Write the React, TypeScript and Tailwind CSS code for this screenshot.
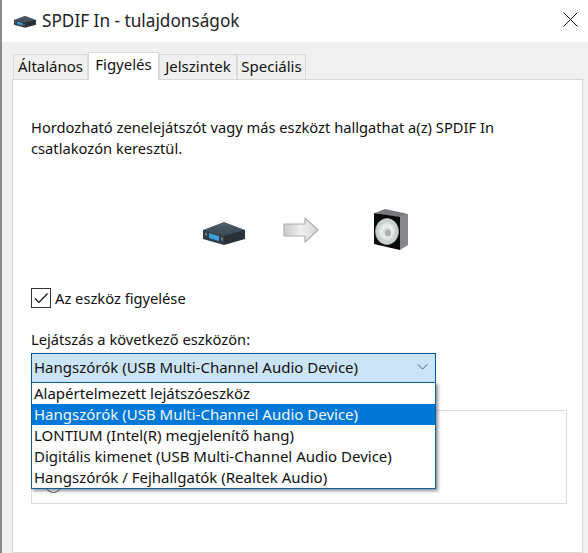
const font = "font-['Noto_Sans','Open_Sans',sans-serif]";

function DeviceIcon({ className }: { className?: string }) {
  return (
    <svg viewBox="0 0 42 24" className={className}>
      <defs>
        <linearGradient id="devTop" x1="0" y1="0" x2="0" y2="1">
          <stop offset="0" stopColor="#4f5f6a" />
          <stop offset="1" stopColor="#36444e" />
        </linearGradient>
      </defs>
      <path d="M0 9 L21 1 L42 9 L42 11 L21 17 L0 11 Z" fill="url(#devTop)" />
      <path d="M0 9 L0 18 L21 24 L21 15 Z" fill="#333c43" />
      <path d="M21 15 L42 9 L42 18 L21 24 Z" fill="#2a3137" />
      <path d="M6 12 L16 15 L16 20 L6 17 Z" fill="#3aa0dc" />
      <path d="M2 11 L4 12 L4 15 L2 14 Z" fill="#6d7a84" />
      <path d="M18 16 L20 17 L20 20 L18 19 Z" fill="#6d7a84" />
    </svg>
  );
}

function ArrowIcon({ className }: { className?: string }) {
  return (
    <svg viewBox="0 0 36 26" className={className}>
      <defs>
        <linearGradient id="arrowFill" x1="0" y1="0" x2="1" y2="0">
          <stop offset="0" stopColor="#c8cac8" />
          <stop offset="0.5" stopColor="#f0f0f0" />
          <stop offset="1" stopColor="#d2d4d2" />
        </linearGradient>
      </defs>
      <path
        d="M1 7 L22 7 L22 1 L35 13 L22 25 L22 19 L1 19 Z"
        fill="url(#arrowFill)"
        stroke="#adb1ad"
        strokeWidth="1.2"
        strokeLinejoin="round"
      />
    </svg>
  );
}

function SpeakerIcon({ className }: { className?: string }) {
  return (
    <svg viewBox="0 0 36 42" className={className}>
      <defs>
        <radialGradient id="cone" cx="0.5" cy="0.5" r="0.55">
          <stop offset="0" stopColor="#b9c2c0" />
          <stop offset="0.4" stopColor="#eef1f1" />
          <stop offset="0.75" stopColor="#c4cccc" />
          <stop offset="1" stopColor="#f2f4f4" />
        </radialGradient>
      </defs>
      <path d="M2 4 L12 0 L35 5 L28 9 Z" fill="#77777b" />
      <path d="M27 7 L35 5 L35 36 L27 41 Z" fill="#87878c" />
      <path d="M1 4 L27 8 L27 41 L1 35 Z" fill="#0a0a0a" />
      <ellipse cx="14" cy="22.5" rx="11.5" ry="13" fill="url(#cone)" stroke="#9ca4a4" strokeWidth="0.8" />
      <ellipse cx="15" cy="24" rx="3" ry="3.5" fill="#aab2b0" />
    </svg>
  );
}

const tabs = [
  { label: "Általános", width: "w-[75px]" },
  { label: "Figyelés", width: "w-[71px]" },
  { label: "Jelszintek", width: "w-[78px]" },
  { label: "Speciális", width: "w-[69px]" },
];
const devices = [
  "Alapértelmezett lejátszóeszköz",
  "Hangszórók (USB Multi-Channel Audio Device)",
  "LONTIUM (Intel(R) megjelenítő hang)",
  "Digitális kimenet (USB Multi-Channel Audio Device)",
  "Hangszórók / Fejhallgatók (Realtek Audio)",
];

export default function App() {
  return (
    <div className={`${font} w-[588px] h-[553px] overflow-hidden bg-white text-[14.7px] text-[#111] border-l-2 border-[#8a8a8a] flex flex-col`}>
      <div className="h-[42px] shrink-0 flex items-center pl-[12px] pr-[10px]">
        <DeviceIcon className="w-[22px] h-[13px]" />
        <span className="ml-[6px] text-[17.2px] text-[#222]">SPDIF In - tulajdonságok</span>
        <svg viewBox="0 0 15 15" className="w-[15px] h-[15px] ml-auto mb-[3px]" fill="none" stroke="#111" strokeWidth="1">
          <path d="M0.5 0.5 L14.5 14.5 M14.5 0.5 L0.5 14.5" />
        </svg>
      </div>
      <div className="flex-1 bg-[#f0f0f0] pt-[10px] pl-[10px] pr-[5px] flex flex-col min-h-0">
        <div className="flex items-end h-[27px] pl-px relative z-10 text-[15px]">
          {tabs.map((t) => (
            <div
              key={t.label}
              className={
                t.label === "Figyelés"
                  ? `${t.width} h-[28px] -mb-px bg-white border border-b-0 border-[#d9d9d9] flex justify-center`
                  : `${t.width} h-[25px] pb-[2px] bg-[#f0f0f0] border border-b-0 border-[#d9d9d9] flex justify-center items-center`
              }
            >
              {t.label}
            </div>
          ))}
        </div>
        <div className="flex-1 bg-white border border-[#d9d9d9] pt-[37px] pl-[18px]">
          <p className="leading-[21px] w-[480px]">
            Hordozható zenelejátszót vagy más eszközt hallgathat a(z) SPDIF In csatlakozón keresztül.
          </p>
          <div className="mt-[50px] flex items-center h-[42px]">
            <DeviceIcon className="ml-[172px] w-[42px] h-[24px] mt-[6px]" />
            <ArrowIcon className="ml-[38px] w-[36px] h-[26px]" />
            <SpeakerIcon className="ml-[54px] w-[36px] h-[42px]" />
          </div>
          <label className="mt-[35px] flex items-center gap-[4px] h-[24px]">
            <span className="w-[20px] h-[20px] border border-[#333] flex items-center justify-center">
              <svg viewBox="0 0 16 16" className="w-[16px] h-[16px]" fill="none" stroke="#111" strokeWidth="1.2">
                <path d="M2 8.5 L6 12.5 L14.5 3.5" />
              </svg>
            </span>
            Az eszköz figyelése
          </label>
          <div className="mt-[19px] leading-[20px]">Lejátszás a következő eszközön:</div>
          <div className="mt-[4px] w-[405px] relative z-10 text-[15px]">
            <div className="h-[30px] pb-[2px] bg-[#cce4f7] border border-[#005499] flex items-center pl-[2px] pr-[7px] justify-between">
              <span>Hangszórók (USB Multi-Channel Audio Device)</span>
              <svg viewBox="0 0 12 7" className="w-[11px] h-[6px]" fill="none" stroke="#444" strokeWidth="1">
                <path d="M0.5 0.5 L6 6 L11.5 0.5" />
              </svg>
            </div>
            <ul className="absolute left-0 top-[29px] w-full bg-white border border-[#1a5f92] shadow-[2px_2px_3px_rgba(40,60,80,0.55)]">
              {devices.map((d, i) => (
                <li
                  key={d}
                  className={`h-[21px] leading-[20px] pl-[2px] ${i === 1 ? "bg-[#0078d7] text-[#f2f7fc]" : ""}`}
                >
                  {d}
                </li>
              ))}
            </ul>
          </div>
          <div className="mt-[27px] h-[94px] mr-[15px] border border-[#dcdcdc] flex items-end pb-[10px] pl-[13px]">
            <span className="w-[17px] h-[17px] rounded-full border border-[#555]" />
          </div>
        </div>
      </div>
    </div>
  );
}
